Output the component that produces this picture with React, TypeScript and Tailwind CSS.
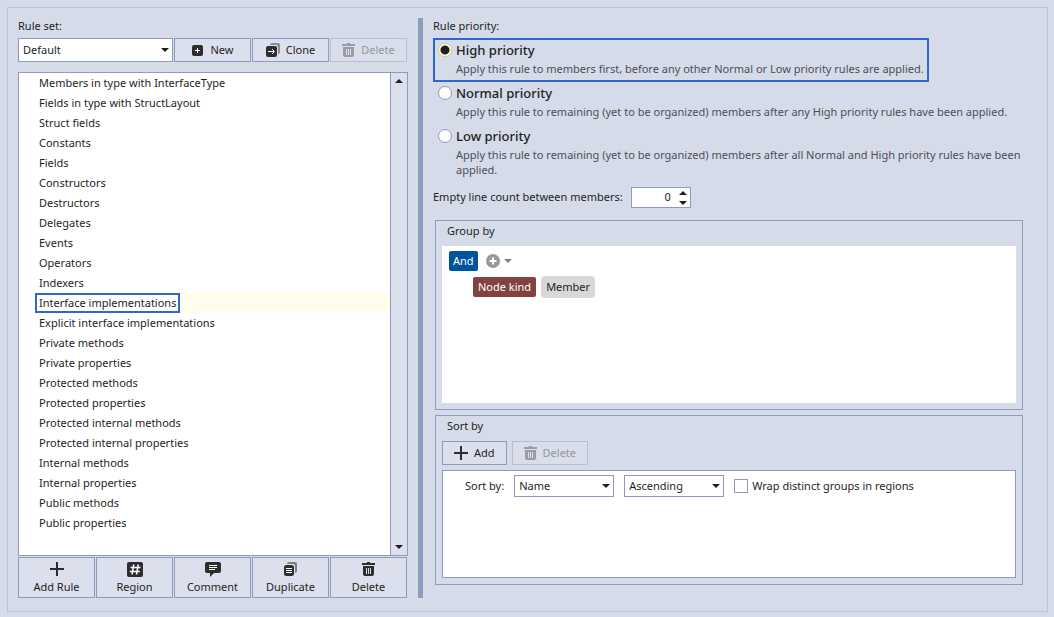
import React, { useState } from 'react';

const rules = [
  'Members in type with InterfaceType',
  'Fields in type with StructLayout',
  'Struct fields',
  'Constants',
  'Fields',
  'Constructors',
  'Destructors',
  'Delegates',
  'Events',
  'Operators',
  'Indexers',
  'Interface implementations',
  'Explicit interface implementations',
  'Private methods',
  'Private properties',
  'Protected methods',
  'Protected properties',
  'Protected internal methods',
  'Protected internal properties',
  'Internal methods',
  'Internal properties',
  'Public methods',
  'Public properties',
];

const priorities = [
  {
    id: 'high',
    title: 'High priority',
    text: 'Apply this rule to members first, before any other Normal or Low priority rules are applied.',
  },
  {
    id: 'normal',
    title: 'Normal priority',
    text: 'Apply this rule to remaining (yet to be organized) members after any High priority rules have been applied.',
  },
  {
    id: 'low',
    title: 'Low priority',
    text: 'Apply this rule to remaining (yet to be organized) members after all Normal and High priority rules have been applied.',
  },
];

/* Icons */

const PlusIcon = () => (
  <svg width="14" height="14" viewBox="0 0 14 14" aria-hidden="true">
    <path d="M6 0h2v6h6v2H8v6H6V8H0V6h6z" fill="#2d2d2d" />
  </svg>
);

const NewIcon = () => (
  <svg width="11" height="11" viewBox="0 0 11 11" aria-hidden="true">
    <rect width="11" height="11" rx="2" fill="#2d2d2d" />
    <path d="M5.5 3v5M3 5.5h5" stroke="#fff" />
  </svg>
);

const CloneIcon = () => (
  <svg width="14" height="14" viewBox="0 0 14 14" aria-hidden="true">
    <path d="M4 2a2 2 0 0 1 2-2h6a2 2 0 0 1 2 2v7a2 2 0 0 1-2 2V4a2 2 0 0 0-2-2z" fill="#8b8d97" />
    <rect y="3" width="11" height="11" rx="2" fill="#2d2d2d" />
    <path d="M2 8.5h6M6 6l2.5 2.5L6 11" fill="none" stroke="#fff" />
  </svg>
);

const TrashIcon = ({ muted = false }: { muted?: boolean }) => (
  <svg width="13" height="14" viewBox="0 0 13 14" aria-hidden="true" fill={muted ? '#9a9ca6' : '#2d2d2d'}>
    <path d="M0 1h5V0h3v1h5v2H0zM1 4h11v8a2 2 0 0 1-2 2H3a2 2 0 0 1-2-2z" />
    <path d="M4.5 6v6M6.5 6v6M8.5 6v6" stroke="#dce0ec" />
  </svg>
);

const RegionIcon = () => (
  <svg width="16" height="15" viewBox="0 0 16 15" aria-hidden="true">
    <rect width="16" height="15" rx="2" fill="#2d2d2d" />
    <path d="M6.8 2.5 5 12.5M11.3 2.5 9.5 12.5M3.5 5.5h10M2.8 9.5h10" stroke="#fff" strokeWidth="1.5" />
  </svg>
);

const CommentIcon = () => (
  <svg width="16" height="15" viewBox="0 0 16 15" aria-hidden="true">
    <path d="M2 0h12a2 2 0 0 1 2 2v7a2 2 0 0 1-2 2H9l-4 4v-4H2a2 2 0 0 1-2-2V2a2 2 0 0 1 2-2z" fill="#2d2d2d" />
    <path d="M4 3.5h8M4 5.5h8M4 7.5h6" stroke="#fff" />
  </svg>
);

const DuplicateIcon = () => (
  <svg width="13" height="14" viewBox="0 0 13 14" aria-hidden="true">
    <path d="M3 2a2 2 0 0 1 2-2h6a2 2 0 0 1 2 2v7a2 2 0 0 1-2 2V4a2 2 0 0 0-2-2z" fill="#7d7f89" />
    <rect y="3" width="10" height="11" rx="2.5" fill="#2d2d2d" />
    <path d="M2 6.5h6M2 8.5h6M2 10.5h6" stroke="#fff" />
  </svg>
);

const Arrow = ({ up = false, color = '#1e1e1e' }: { up?: boolean; color?: string }) => (
  <svg width="8" height="4" viewBox="0 0 8 4" aria-hidden="true">
    <path d={up ? 'M0 4 4 0l4 4z' : 'M0 0h8L4 4z'} fill={color} />
  </svg>
);

/* Controls */

type SelectProps = { id: string; label: string; options: string[]; className: string };

const Select = ({ id, label, options, className }: SelectProps) => (
  <div className={`relative ${className}`}>
    <select
      id={id}
      aria-label={label}
      className="h-full w-full appearance-none border border-[#8e9bbc] bg-white px-1 leading-4 outline-none"
    >
      {options.map((option) => (
        <option key={option}>{option}</option>
      ))}
    </select>
    <span className="pointer-events-none absolute inset-y-0 right-1 flex items-center">
      <Arrow />
    </span>
  </div>
);

type ButtonProps = { icon: React.ReactNode; label: string; disabled?: boolean; className?: string };

const ToolButton = ({ icon, label, disabled, className = '' }: ButtonProps) => (
  <button
    type="button"
    disabled={disabled}
    className={`flex h-6 items-center justify-center border border-[#8e9bbc] bg-[#dce0ec] disabled:border-[#b7bfd6] disabled:bg-[#d9deea] disabled:text-[#9496a0] ${className}`}
  >
    {icon}
    <span>{label}</span>
  </button>
);

const StackButton = ({ icon, label }: ButtonProps) => (
  <button
    type="button"
    className="flex h-[41px] flex-col items-center justify-between border border-[#8e9bbc] bg-[#dce0ec] pt-[3px] pb-[2px]"
  >
    <span className="flex h-4 items-center">{icon}</span>
    <span className="leading-4">{label}</span>
  </button>
);

const RulePanel = () => {
  const [selected, setSelected] = useState('Interface implementations');

  return (
    <div className="flex w-[390px] shrink-0 flex-col">
      <label htmlFor="rule-set" className="leading-4">
        Rule set:
      </label>
      <div className="mt-1 mr-px grid grid-cols-5 gap-px">
        <Select id="rule-set" label="Rule set:" options={['Default']} className="col-span-2 h-6" />
        <ToolButton icon={<NewIcon />} label="New" className="gap-2" />
        <ToolButton icon={<CloneIcon />} label="Clone" className="gap-1.5" />
        <ToolButton icon={<TrashIcon muted />} label="Delete" disabled className="gap-1.5" />
      </div>

      {/* Rule list */}
      <div className="mt-2.5 flex flex-1 border border-[#8e9bbc] bg-white">
        <ul role="listbox" aria-label="Rules" className="flex-1">
          {rules.map((rule) => {
            const active = rule === selected;
            return (
              <li
                key={rule}
                role="option"
                aria-selected={active}
                onClick={() => setSelected(rule)}
                className="flex h-5 items-center pl-4"
              >
                <div className={`flex h-5 flex-1 items-center ${active ? 'bg-[#fffcec]' : ''}`}>
                  <span
                    className={`flex h-5 items-center border-2 px-[2px] ${active ? 'border-[#2f67cf] bg-white' : 'border-transparent'}`}
                  >
                    {rule}
                  </span>
                </div>
              </li>
            );
          })}
        </ul>
        <div className="flex w-[17px] flex-col items-center justify-between border-l border-[#8e9bbc] bg-[#dce0ec] py-1.5">
          <Arrow up />
          <Arrow />
        </div>
      </div>

      <div className="mt-px mr-px grid grid-cols-5 gap-px">
        <StackButton icon={<PlusIcon />} label="Add Rule" />
        <StackButton icon={<RegionIcon />} label="Region" />
        <StackButton icon={<CommentIcon />} label="Comment" />
        <StackButton icon={<DuplicateIcon />} label="Duplicate" />
        <StackButton icon={<TrashIcon />} label="Delete" />
      </div>
    </div>
  );
};

const PriorityPicker = () => {
  const [priority, setPriority] = useState('high');

  return (
    <div className="flex flex-col items-start">
      <div className="leading-4">Rule priority:</div>
      {priorities.map(({ id, title, text }) => (
        <label
          key={id}
          className={`-mb-px flex items-start gap-1 border-2 px-[3px] first-of-type:mt-1 ${priority === id ? 'border-[#2f67cf]' : 'border-transparent'}`}
        >
          <input
            type="radio"
            name="priority"
            checked={priority === id}
            onChange={() => setPriority(id)}
            className="mt-[3px] size-3.5 shrink-0 appearance-none rounded-full border border-[#8e9bbc] bg-white checked:border-[#e5c365] checked:bg-[radial-gradient(circle,#1e1e1e_0_4px,#fff_5px)]"
          />
          <span>
            <span className="block text-[13px] leading-5 font-medium">{title}</span>
            <span className="block pt-px pb-1 leading-[15px] text-[#4c4e57]">{text}</span>
          </span>
        </label>
      ))}
    </div>
  );
};

const GroupBy = () => (
  <section className="mt-3 mr-3.5 ml-[2px] border border-[#8e9bbc] px-1.5 pb-1.5">
    <h2 className="px-[5px] pt-[2px] pb-[7px] leading-4">Group by</h2>
    <div className="min-h-[157px] bg-white px-[7px] py-[5px]">
      <div className="flex items-center">
        <span className="flex h-5 items-center rounded-xs bg-[#00539c] px-1 text-white">And</span>
        <button type="button" aria-label="Add group" className="ml-2 flex items-center gap-1">
          <svg width="14" height="14" viewBox="0 0 14 14" aria-hidden="true">
            <circle cx="7" cy="7" r="7" fill="#999" />
            <path d="M7 3.5v7M3.5 7h7" stroke="#fff" strokeWidth="2" />
          </svg>
          <Arrow color="#808080" />
        </button>
      </div>
      <div className="mt-[5px] flex items-center gap-[5px] pl-6">
        <span className="flex h-5 items-center rounded-xs bg-[#804340] px-[5px] text-white">Node kind</span>
        <span className="flex h-[22px] items-center rounded-sm bg-[#d8d8d8] px-[5px]">Member</span>
      </div>
    </div>
  </section>
);

const SortBy = () => (
  <section className="mt-[5px] mr-3.5 mb-[13px] ml-[2px] flex flex-1 flex-col border border-[#8e9bbc] px-1.5 pb-1.5">
    <h2 className="px-[5px] pt-[2px] pb-[7px] leading-4">Sort by</h2>
    <div className="flex gap-[5px]">
      <ToolButton icon={<PlusIcon />} label="Add" className="gap-1.5 px-[11px]" />
      <ToolButton icon={<TrashIcon muted />} label="Delete" disabled className="gap-1.5 px-[11px]" />
    </div>
    <div className="mt-[5px] flex flex-1 items-start gap-2.5 border border-[#8e9bbc] bg-white py-1 pl-[22px]">
      <label htmlFor="sort-key" className="leading-[22px]">
        Sort by:
      </label>
      <Select id="sort-key" label="Sort by:" options={['Name', 'Access', 'Kind']} className="h-[22px] w-[100px]" />
      <Select
        id="sort-order"
        label="Sort order"
        options={['Ascending', 'Descending']}
        className="h-[22px] w-[100px]"
      />
      <label className="flex h-[22px] items-center gap-1">
        <input type="checkbox" className="size-3.5 appearance-none border border-[#8e9bbc] bg-white" />
        Wrap distinct groups in regions
      </label>
    </div>
  </section>
);

const App = () => {
  return (
    <div className="flex min-h-screen bg-[#d6dbe9] pt-[7px] pr-1.5 pb-[5px] pl-[7px] font-['Noto_Sans','Open_Sans',sans-serif] text-[11px] text-[#1e1e1e]">
      <main className="flex flex-1 border border-[#bcc3d7] px-2.5 pt-2.5 pb-[13px]">
        <RulePanel />
        <div className="ml-2.5 w-[5px] shrink-0 bg-[#8e9bbc]" />
        <div className="ml-2.5 flex min-w-0 flex-1 flex-col">
          <PriorityPicker />
          <div className="mt-[5px] flex items-center gap-2">
            <label htmlFor="line-count">Empty line count between members:</label>
            <div className="flex h-[21px] w-[60px] items-center border border-[#8e9bbc] bg-white pr-[3px]">
              <input id="line-count" type="text" defaultValue="0" className="w-0 flex-1 pr-2 text-right outline-none" />
              <div className="flex w-2 flex-col items-center gap-1.5">
                <button type="button" aria-label="Increase" className="flex">
                  <Arrow up />
                </button>
                <button type="button" aria-label="Decrease" className="flex">
                  <Arrow />
                </button>
              </div>
            </div>
          </div>
          <GroupBy />
          <SortBy />
        </div>
      </main>
    </div>
  );
};

export default App;
